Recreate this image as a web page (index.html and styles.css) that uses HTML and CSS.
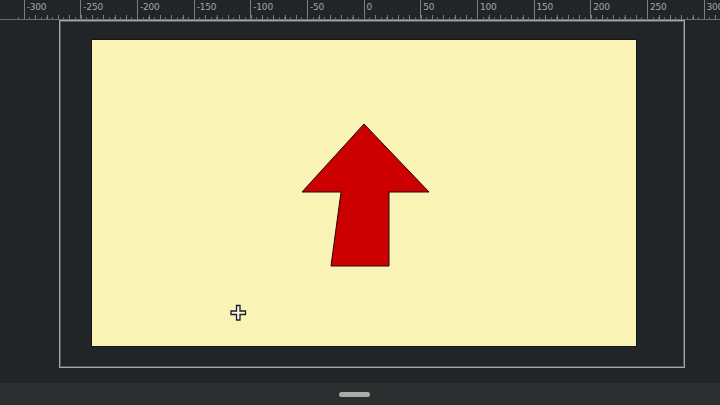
FILE: index.html
```html
<!DOCTYPE html>
<html>
<head>
<meta charset="utf-8">
<link rel="stylesheet" href="styles.css">
</head>
<body>
<div class="app">
  <div class="ruler">
    <div class="ticks"></div>
    <div class="labels">
      <span>-300</span><span>-250</span><span>-200</span><span>-150</span><span>-100</span><span>-50</span><span>0</span><span>50</span><span>100</span><span>150</span><span>200</span><span>250</span><span>300</span>
    </div>
  </div>
  <div class="canvas">
    <div class="frame">
      <div class="page">
        <svg class="art" width="544" height="306" viewBox="0 0 544 306">
          <polygon points="272,84 337,152 297,152 297,226 239,226 249,152 210,152" fill="#cc0000" stroke="#1a0a0a" stroke-width="1" stroke-linejoin="miter"/>
          <path d="M144.5 265.5 h3.5 v5.5 h5.5 v3.5 h-5.5 v5.5 h-3.5 v-5.5 h-5.5 v-3.5 h5.5 z" fill="#f4f4f0" stroke="#1e1e1e" stroke-width="1.3"/>
        </svg>
      </div>
    </div>
  </div>
  <div class="statusbar">
    <div class="handle"></div>
  </div>
</div>
</body>
</html>
```

FILE: styles.css
```css
html, body {
  margin: 0;
  padding: 0;
  background: #222527;
  width: 720px;
  height: 405px;
  overflow: hidden;
  font-family: "DejaVu Sans", sans-serif;
}
.app {
  display: flex;
  flex-direction: column;
  width: 720px;
  height: 405px;
}
.ruler {
  height: 19px;
  border-bottom: 1px solid #6c6f70;
  background: #222527;
  position: relative;
  flex: none;
  overflow: hidden;
}
.ticks {
  position: absolute;
  left: 0;
  right: 0;
  bottom: 0;
  height: 6px;
  background-image:
    repeating-linear-gradient(90deg, #7a7e80 0 1px, transparent 1px 11.3333px),
    repeating-linear-gradient(90deg, #62666a 0 1px, transparent 1px 5.6667px);
  background-size: 100% 4px, 100% 2px;
  background-repeat: no-repeat;
  background-position: 23.67px 100%, 18px 100%;
}
.labels {
  display: flex;
  padding-left: 23.67px;
  height: 19px;
  width: 800px;
}
.labels span {
  flex: none;
  width: 56.667px;
  box-sizing: border-box;
  border-left: 1px solid #7b7f81;
  color: #a3a6a7;
  font-size: 9px;
  line-height: 11px;
  padding: 2px 0 0 2px;
  height: 19px;
  letter-spacing: -0.2px;
}
.canvas {
  flex: 1;
  padding: 0 0 0 59px;
}
.frame {
  width: 626px;
  height: 348px;
  box-sizing: border-box;
  border: 1px solid #a4a7a8;
  box-shadow: inset 0 0 0 1px #55595a;
  padding: 18px 0 0 31px;
}
.page {
  width: 546px;
  height: 308px;
  box-sizing: border-box;
  border: 1px solid #151718;
  background: #f9f3b6;
}
.art {
  display: block;
}
.statusbar {
  height: 22px;
  flex: none;
  background: #2b2f30;
  display: flex;
  justify-content: center;
  padding-top: 9px;
  box-sizing: border-box;
}
.handle {
  width: 31px;
  height: 5px;
  border-radius: 3px;
  background: #a9aaaa;
  margin-left: -11px;
}
```
